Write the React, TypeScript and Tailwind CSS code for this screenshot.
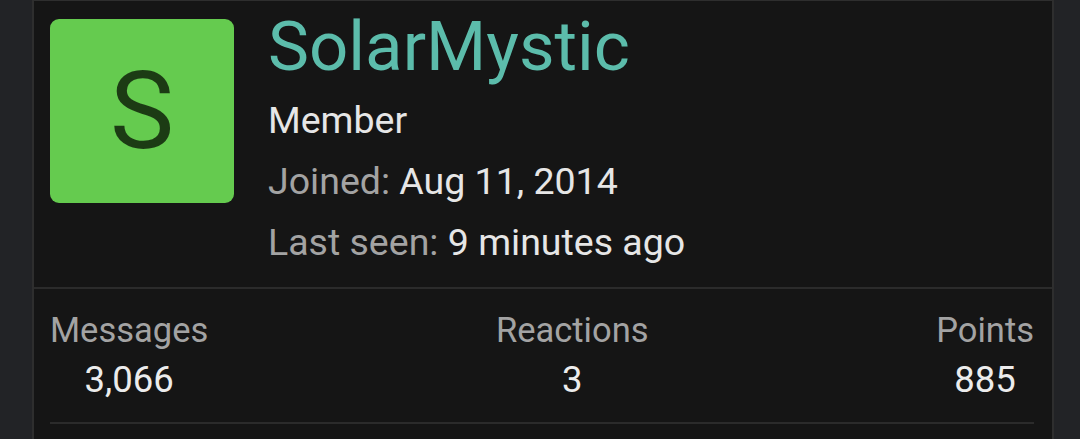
export default function App() {
  const font = { fontFamily: "Roboto, 'Noto Sans', sans-serif" };
  return (
    <div className="w-[1080px] h-[439px] overflow-hidden bg-[#222326] pl-[32px]" style={font}>
      <div className="w-[1022px] h-[460px] bg-[#151515] border-x-2 border-t border-[#2e2e2e]">
        <div className="flex gap-[34px] pl-[16px] pt-[18px] pb-[14px] border-b-2 border-[#2b2b2b]">
          <div className="w-[184px] h-[184px] rounded-[9px] bg-[#65cb4f] flex items-center justify-center shrink-0">
            <span className="text-[108px] leading-none text-[#1c3b14]">S</span>
          </div>
          <div className="flex flex-col">
            <div className="text-[69px] leading-[56px] text-[#5cbcab]">SolarMystic</div>
            <div className="mt-[15px] text-[37.5px] leading-[61px] text-[#e6e6e6]">Member</div>
            <div className="text-[37.5px] leading-[61px] text-[#a3a3a3]">
              Joined: <span className="text-[#e6e6e6]">Aug 11, 2014</span>
            </div>
            <div className="text-[37.5px] leading-[61px] text-[#a3a3a3]">
              Last seen: <span className="text-[#e6e6e6]">9 minutes ago</span>
            </div>
          </div>
        </div>
        <div className="ml-[16px] mr-[18px] pt-[21px] pb-[22px] border-b-2 border-[#2b2b2b] flex justify-between">
          {[
            ["Messages", "3,066"],
            ["Reactions", "3"],
            ["Points", "885"],
          ].map(([l, v]) => (
            <div key={l} className="flex flex-col items-center">
              <div className="text-[34.5px] leading-[40px] text-[#a3a3a3]">{l}</div>
              <div className="mt-[10px] text-[36.5px] leading-[40px] text-[#ececec]">{v}</div>
            </div>
          ))}
        </div>
      </div>
    </div>
  );
}
